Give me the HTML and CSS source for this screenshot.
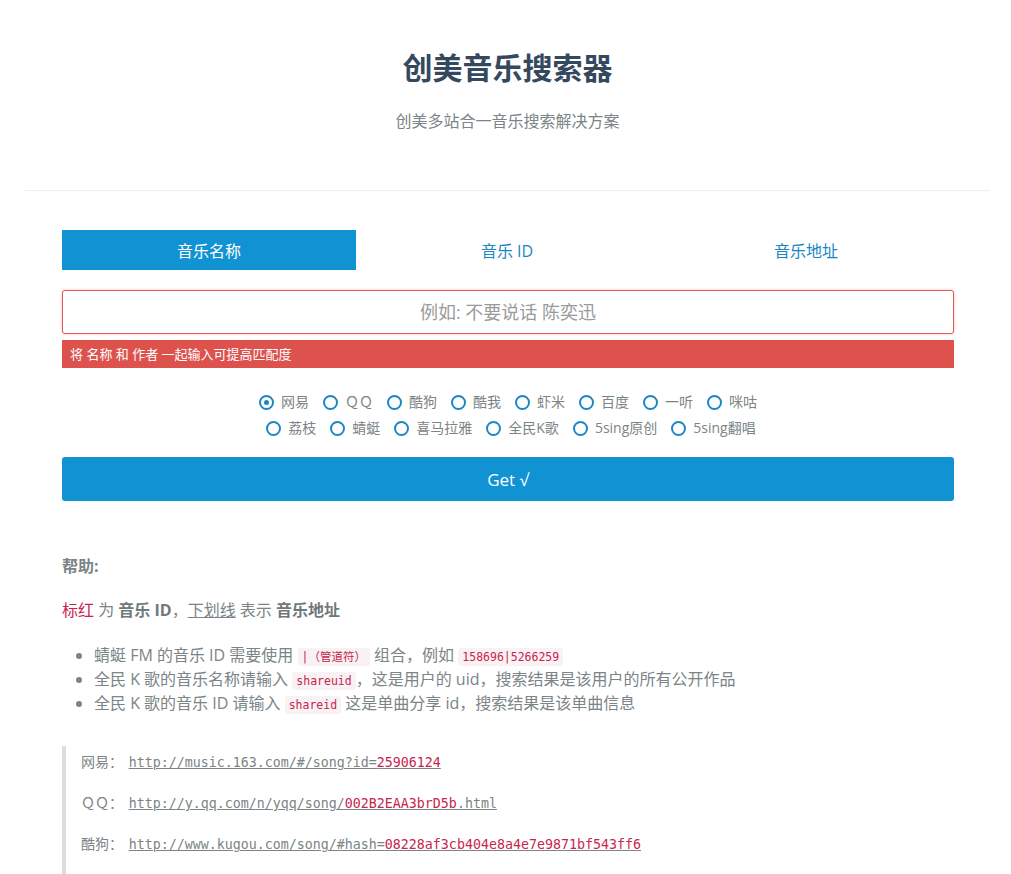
FILE: index.html
```html
<!DOCTYPE html>
<html lang="zh-CN">
<head>
<meta charset="utf-8">
<title>创美音乐搜索器</title>
<link rel="stylesheet" href="styles.css">
</head>
<body>
<header class="header">
  <h1 class="title">创美音乐搜索器</h1>
  <p class="subtitle">创美多站合一音乐搜索解决方案</p>
</header>
<main class="main">
  <nav class="tabs">
    <a class="tab active">音乐名称</a>
    <a class="tab">音乐 ID</a>
    <a class="tab">音乐地址</a>
  </nav>
  <div class="input-box">
    <input class="search" type="text" placeholder="例如: 不要说话 陈奕迅">
  </div>
  <div class="error">将 名称 和 作者 一起输入可提高匹配度</div>
  <div class="radios">
    <div class="radio-row">
      <label class="radio"><span class="dot checked"></span>网易</label>
      <label class="radio"><span class="dot"></span>ＱＱ</label>
      <label class="radio"><span class="dot"></span>酷狗</label>
      <label class="radio"><span class="dot"></span>酷我</label>
      <label class="radio"><span class="dot"></span>虾米</label>
      <label class="radio"><span class="dot"></span>百度</label>
      <label class="radio"><span class="dot"></span>一听</label>
      <label class="radio"><span class="dot"></span>咪咕</label>
    </div>
    <div class="radio-row">
      <label class="radio"><span class="dot"></span>荔枝</label>
      <label class="radio"><span class="dot"></span>蜻蜓</label>
      <label class="radio"><span class="dot"></span>喜马拉雅</label>
      <label class="radio"><span class="dot"></span>全民K歌</label>
      <label class="radio"><span class="dot"></span>5sing原创</label>
      <label class="radio"><span class="dot"></span>5sing翻唱</label>
    </div>
  </div>
  <button class="get">Get √</button>

  <section class="help">
    <h4 class="help-title">帮助:</h4>
    <p class="legend"><span class="red">标红</span> 为 <b>音乐 ID</b>，<u>下划线</u> 表示 <b>音乐地址</b></p>
    <ul class="notes">
      <li>蜻蜓 FM 的音乐 ID 需要使用 <code>|（管道符）</code> 组合，例如 <code>158696|5266259</code></li>
      <li>全民 K 歌的音乐名称请输入 <code>shareuid</code>，这是用户的 uid，搜索结果是该用户的所有公开作品</li>
      <li>全民 K 歌的音乐 ID 请输入 <code>shareid</code> 这是单曲分享 id，搜索结果是该单曲信息</li>
    </ul>
    <blockquote class="examples">
      <p>网易： <span class="url">http://music.163.com/#/song?id=<span class="red">25906124</span></span></p>
      <p>ＱＱ： <span class="url">http://y.qq.com/n/yqq/song/<span class="red">002B2EAA3brD5b</span>.html</span></p>
      <p>酷狗： <span class="url">http://www.kugou.com/song/#hash=<span class="red">08228af3cb404e8a4e7e9871bf543ff6</span></span></p>
    </blockquote>
  </section>
</main>
</body>
</html>
```
FILE: styles.css
```css
* { box-sizing: border-box; }
html, body { margin: 0; padding: 0; background: #fff; }
body {
  font-family: "Open Sans", "Noto Sans CJK SC", sans-serif;
  color: #7b8487;
  font-size: 16px;
}
.header {
  margin: 0 21px 0 25px;
  border-bottom: 1px solid #eeeeee;
  text-align: center;
  padding: 46px 0 58px;
}
.title {
  margin: 0;
  font-size: 30px;
  line-height: 44px;
  font-weight: 700;
  color: #34495e;
}
.subtitle {
  margin: 20px 0 0;
  font-size: 16px;
  line-height: 22px;
  color: #7b8487;
}
.main {
  margin: 39px 57px 0 62px;
}
.tabs {
  display: flex;
  height: 40px;
}
.tab {
  flex: 1;
  display: flex;
  align-items: center;
  justify-content: center;
  font-size: 16px;
  color: #1a86c6;
}
.tab.active {
  background: #1192d3;
  color: #fff;
  flex: 0 0 294px;
}
.tab:nth-child(2) { flex: 0 0 302px; }
.input-box { margin-top: 20px; }
.search {
  display: block;
  width: 100%;
  height: 44px;
  border: 1px solid #e25c57;
  border-radius: 3px;
  box-shadow: 0 0 3px rgba(217, 83, 79, 0.4);
  text-align: center;
  font-family: "Open Sans", "Noto Sans CJK SC", sans-serif;
  font-size: 18px;
  outline: none;
}
.search::placeholder { color: #9a9a9a; }
.error {
  margin-top: 6px;
  height: 28px;
  background: #dd524d;
  color: #fff;
  font-size: 13px;
  line-height: 28px;
  padding-left: 8px;
}
.radios {
  margin-top: 23px;
  display: flex;
  flex-direction: column;
  align-items: center;
  gap: 4px;
}
.radio-row {
  display: flex;
  gap: 14px;
}
.radio-row + .radio-row { padding-left: 6px; }
.radio {
  display: flex;
  align-items: center;
  gap: 7px;
  font-size: 14px;
  line-height: 22px;
  color: #7b8487;
}
.dot {
  width: 15px;
  height: 15px;
  border: 2px solid #1f86c4;
  border-radius: 50%;
  display: inline-flex;
  align-items: center;
  justify-content: center;
}
.dot.checked::after {
  content: "";
  width: 5px;
  height: 5px;
  border-radius: 50%;
  background: #1f86c4;
}
.get {
  display: block;
  width: 100%;
  height: 44px;
  margin-top: 18px;
  border: none;
  border-radius: 3px;
  background: #1192d3;
  color: #fff;
  font-family: "Open Sans", "Noto Sans CJK SC", sans-serif;
  font-size: 17px;
}
.help { margin-top: 54px; }
.help-title {
  margin: 0;
  font-size: 16px;
  line-height: 22px;
  font-weight: 700;
  color: #7b8487;
}
.legend {
  margin: 22px 0 0;
  font-size: 16px;
  line-height: 22px;
}
.legend b { color: #6f787b; }
.red { color: #c7254e; }
.notes {
  margin: 22px 0 0;
  padding-left: 32px;
  font-size: 16px;
  line-height: 24px;
}
code {
  font-family: "DejaVu Sans Mono", "Noto Sans CJK SC", monospace;
  font-size: 11.5px;
  line-height: 1;
  color: #c7254e;
  background: #f9f2f4;
  padding: 2px 4px;
  border-radius: 3px;
}
.examples {
  margin: 31px 0 0;
  border-left: 4px solid #dddddd;
  padding: 5px 0 8px 15px;
}
.examples p {
  margin: 0 0 20px;
  font-size: 14px;
  line-height: 21px;
  height: 21px;
}
.url {
  font-family: "DejaVu Sans Mono", monospace;
  font-size: 13.3px;
  line-height: 1;
  text-decoration: underline;
  margin-left: 2px;
}
```
